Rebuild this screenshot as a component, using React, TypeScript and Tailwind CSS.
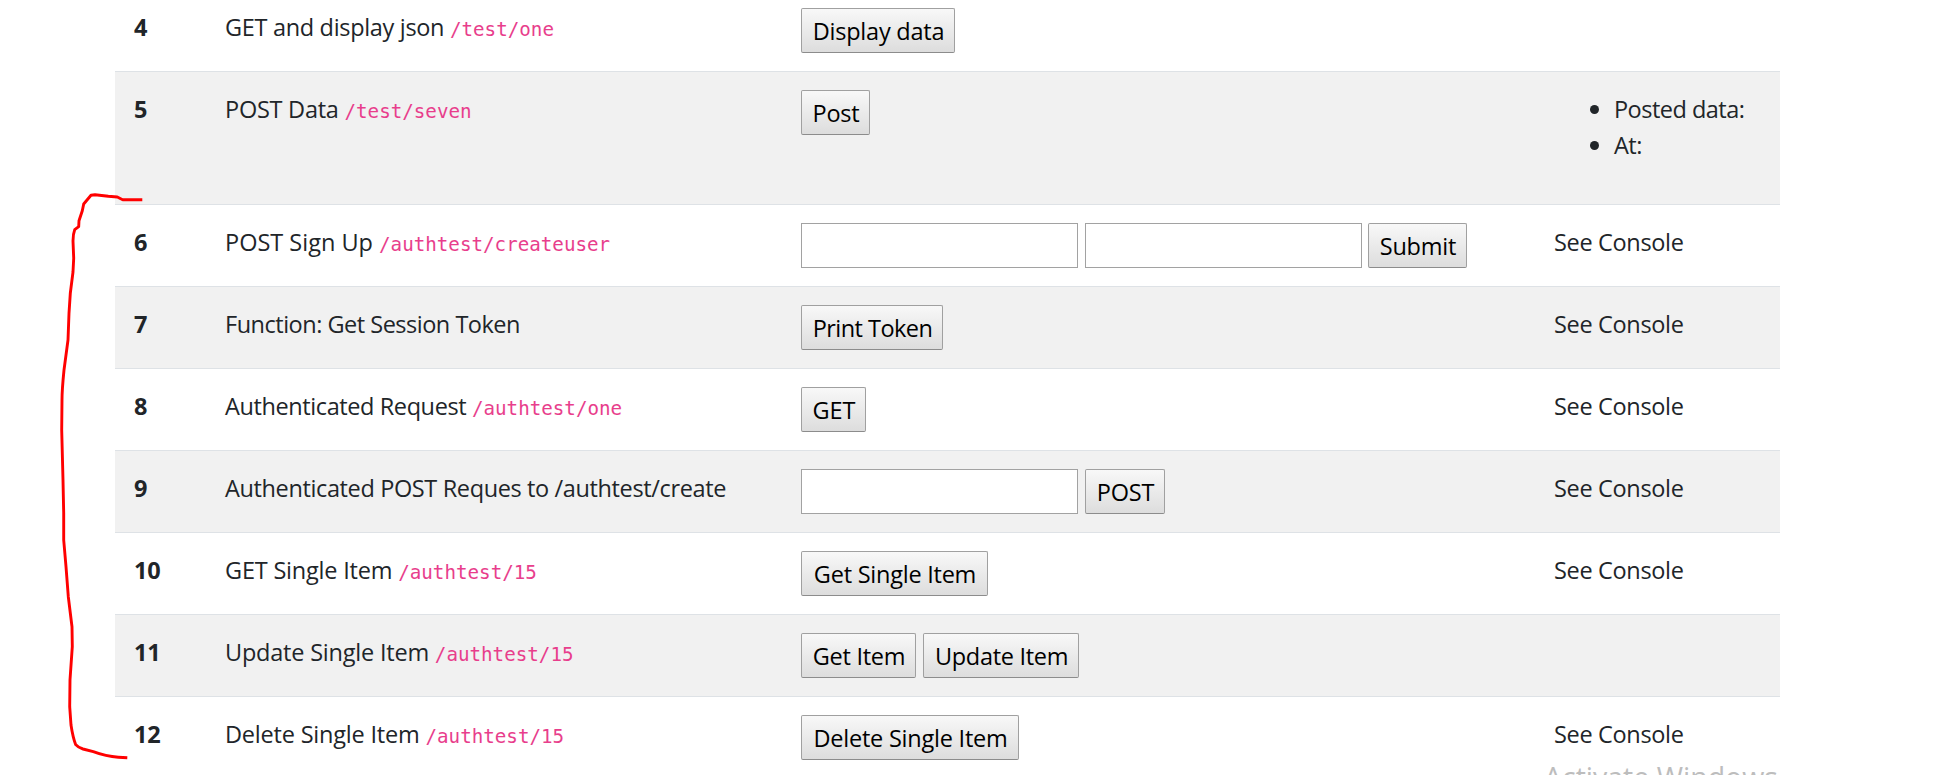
import type { ReactNode } from "react";

type RowProps = {
  n: number;
  label: string;
  tracking: string;
  code?: string;
  note?: ReactNode;
  striped?: boolean;
  children: ReactNode;
};

function Button({ children, className }: { children: ReactNode; className: string }) {
  return (
    <button
      className={`flex h-[45px] justify-center whitespace-nowrap rounded-[2px] border border-[#a0a0a0] border-b-[#8c8c8c] bg-linear-to-b from-[#f8f8f8] to-[#dddddd] pl-px leading-[45px] text-black ${className}`}
    >
      {children}
    </button>
  );
}

function TextField() {
  return <input type="text" className="h-[45px] w-[277px] border border-[#a2a2a2] bg-white px-2 outline-none" />;
}

function Row({ n, label, tracking, code, note, striped, children }: RowProps) {
  return (
    <tr className={`border-t border-[#dee2e6] align-top ${striped ? "bg-[#f1f1f1]" : "bg-white"}`}>
      <th className="pt-[19px] pr-[17px] pb-[17px] pl-[19px] text-left font-bold tracking-[-0.2px]">{n}</th>
      <td className="whitespace-nowrap px-[18px] pt-[19px]">
        <span className={`whitespace-pre ${tracking}`}>{label}</span>
        {code && <code className="font-['DejaVu_Sans_Mono',monospace] text-[19.2px] leading-none text-[#e83e8c]">{code}</code>}
      </td>
      <td className="px-[18px] py-[18px]">
        <div className="flex gap-[7px]">{children}</div>
      </td>
      <td className="whitespace-nowrap px-[18px] pt-[19px] tracking-[-0.33px]">{note}</td>
    </tr>
  );
}

function Bullet({ children }: { children: ReactNode }) {
  return (
    <li className="flex items-center gap-[15px]">
      <span className="size-[9px] rounded-full bg-[#212529]" />
      {children}
    </li>
  );
}

const seeConsole = "See Console";

export default function App() {
  return (
    <div className="relative h-[775px] w-[1942px] overflow-hidden bg-white font-['Open_Sans','Noto_Sans',sans-serif] text-[23.5px] leading-[36px] text-[#212529]">
      <table className="-mt-[11px] ml-[115px] w-[1665px] table-fixed border-collapse">
        <colgroup>
          <col className="w-[92px]" />
          <col className="w-[576px]" />
          <col className="w-[753px]" />
          <col className="w-[244px]" />
        </colgroup>
        <tbody>
          <Row n={4} label="GET and display json " tracking="tracking-[-0.32px]" code="/test/one">
            <Button className="w-[154px] tracking-[-0.22px]">Display data</Button>
          </Row>
          <Row
            n={5}
            label="POST Data "
            tracking="tracking-[-0.25px]"
            code="/test/seven"
            striped
            note={
              <ul className="mb-[41px] pl-[36px] tracking-[-0.52px]">
                <Bullet>Posted data:</Bullet>
                <Bullet>At:</Bullet>
              </ul>
            }
          >
            <Button className="w-[69px] tracking-[-0.22px]">Post</Button>
          </Row>
          <Row n={6} label="POST Sign Up " tracking="tracking-[0px]" code="/authtest/createuser" note={seeConsole}>
            <TextField />
            <TextField />
            <Button className="-ml-px w-[99px] tracking-[-0.2px]">Submit</Button>
          </Row>
          <Row n={7} label="Function: Get Session Token" tracking="tracking-[-0.49px]" striped note={seeConsole}>
            <Button className="w-[142px] tracking-[-0.55px]">Print Token</Button>
          </Row>
          <Row n={8} label="Authenticated Request " tracking="tracking-[-0.4px]" code="/authtest/one" note={seeConsole}>
            <Button className="w-[65px] tracking-[-0.1px]">GET</Button>
          </Row>
          <Row n={9} label="Authenticated POST Reques to /authtest/create" tracking="tracking-[-0.37px]" striped note={seeConsole}>
            <TextField />
            <Button className="w-[80px] tracking-[-0.2px]">POST</Button>
          </Row>
          <Row n={10} label="GET Single Item " tracking="tracking-[-0.2px]" code="/authtest/15" note={seeConsole}>
            <Button className="w-[187px] tracking-[-0.24px]">Get Single Item</Button>
          </Row>
          <Row n={11} label="Update Single Item " tracking="tracking-[-0.21px]" code="/authtest/15" striped>
            <Button className="w-[115px] tracking-[-0.28px]">Get Item</Button>
            <Button className="w-[156px] tracking-[-0.3px]">Update Item</Button>
          </Row>
          <Row n={12} label="Delete Single Item " tracking="tracking-[-0.2px]" code="/authtest/15" note={seeConsole}>
            <Button className="w-[218px] tracking-[-0.22px]">Delete Single Item</Button>
          </Row>
        </tbody>
      </table>

      <svg className="pointer-events-none absolute top-0 left-0" width="200" height="775" fill="none">
        <path
          d="M142.3 199.7 L122.7 199.7 L117.3 197 L108.3 196.3 L95 194.7 L91 195.3 L83.7 204 L82.3 210.7 L79 220.7 L78.7 226.7 L74.7 229.7 Q73 234 73 241 L73.7 258.3 L73 272 L70.3 293.3 L69 313.3 L68 340 L64 370 Q62 390 62 400 L61.7 430 L63 480 L63.7 513 L63.7 540 L66 566.7 L68.3 596.7 L72 626.7 L72.3 646.7 L70 680 L69.7 706.7 L71 725 Q73 738 75.7 744.7 Q78 747.5 83 749 L93.3 751.7 Q106 756.5 118.3 757.3 L127.3 757.7"
          stroke="#ff0000"
          strokeWidth="2.9"
          strokeLinejoin="round"
        />
      </svg>

      <div className="pointer-events-none absolute top-[755px] left-[1544px] whitespace-nowrap text-[28.5px] leading-[44px] text-[#bdbdbd]">
        Activate Windows
      </div>
    </div>
  );
}
